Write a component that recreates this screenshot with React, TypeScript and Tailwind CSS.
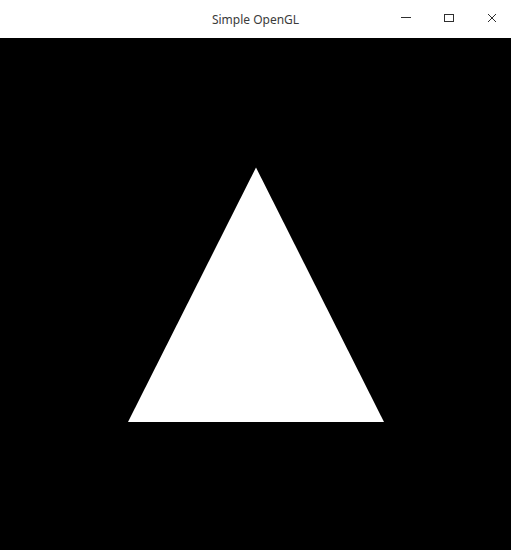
export default function App() {
  return (
    <div className="w-[511px] h-[550px] flex flex-col bg-black overflow-hidden">
      <div className="relative h-[38px] shrink-0 bg-white flex items-center justify-center">
        <span
          className="text-[12px] text-[#3b3b3b] leading-none pt-px"
          style={{ fontFamily: '"Noto Sans", "Open Sans", sans-serif' }}
        >
          Simple OpenGL
        </span>
        <svg width="511" height="38" viewBox="0 0 511 38" className="absolute inset-0">
          <line x1="401" y1="17.5" x2="411" y2="17.5" stroke="#2f2f2f" strokeWidth="1" />
          <rect x="444.5" y="14.5" width="9" height="7" fill="none" stroke="#2f2f2f" strokeWidth="1" />
          <path d="M488 14 L496 22 M496 14 L488 22" stroke="#2f2f2f" strokeWidth="1" />
        </svg>
      </div>
      <div className="flex-1">
        <svg width="511" height="512" viewBox="0 0 511 512" className="block">
          <polygon points="128,384 384,384 256,129.5" fill="#ffffff" />
        </svg>
      </div>
    </div>
  );
}
